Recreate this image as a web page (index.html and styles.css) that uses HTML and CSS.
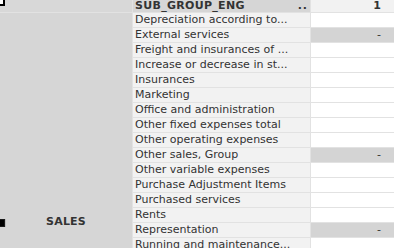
FILE: index.html
```html
<!DOCTYPE html>
<html>
<head>
<meta charset="utf-8">
<link rel="stylesheet" href="styles.css">
</head>
<body>
<div class="pivot">
  <div class="dim-head"><span class="toggle-top"></span></div>
  <div class="head"><span class="head-label">SUB_GROUP_ENG</span><span class="dots">..</span></div>
  <div class="val-head">1</div>
  <div class="dim-cell">
    <span class="toggle"></span>
    <span class="dim-label">SALES</span>
  </div>

  <div class="cell">Depreciation according to...</div><div class="val"></div>
  <div class="cell">External services</div><div class="val shade">-</div>
  <div class="cell">Freight and insurances of ...</div><div class="val"></div>
  <div class="cell">Increase or decrease in st...</div><div class="val"></div>
  <div class="cell">Insurances</div><div class="val"></div>
  <div class="cell">Marketing</div><div class="val"></div>
  <div class="cell">Office and administration</div><div class="val"></div>
  <div class="cell">Other fixed expenses total</div><div class="val"></div>
  <div class="cell">Other operating expenses</div><div class="val"></div>
  <div class="cell">Other sales, Group</div><div class="val shade">-</div>
  <div class="cell">Other variable expenses</div><div class="val"></div>
  <div class="cell">Purchase Adjustment Items</div><div class="val"></div>
  <div class="cell">Purchased services</div><div class="val"></div>
  <div class="cell">Rents</div><div class="val"></div>
  <div class="cell">Representation</div><div class="val shade">-</div>
  <div class="cell">Running and maintenance...</div><div class="val"></div>
</div>
</body>
</html>
```

FILE: styles.css
```css
html, body {
  margin: 0;
  padding: 0;
  width: 394px;
  height: 248px;
  overflow: hidden;
  background: #ffffff;
}

.pivot {
  display: grid;
  grid-template-columns: 132px 177px 83px;
  grid-template-rows: 12px;
  grid-auto-rows: 14px;
  column-gap: 1px;
  row-gap: 1px;
  background: #e2e2e2;
  font-family: "DejaVu Sans", Verdana, sans-serif;
  font-size: 11px;
  color: #333333;
  width: 394px;
}

.dim-head {
  background: #d8d8d8;
  overflow: hidden;
}

.toggle-top {
  display: block;
  width: 3px;
  height: 4px;
  background: #ffffff;
  border-right: 2px solid #000000;
  border-bottom: 2px solid #000000;
}

.head {
  background: #d6d6d6;
  display: flex;
  align-items: center;
  justify-content: space-between;
  padding: 0 2px 0 2px;
  font-weight: bold;
  line-height: 12px;
  letter-spacing: 0.3px;
}

.head-label {
  margin-top: -1px;
}

.dots {
  letter-spacing: 1px;
  margin-right: 0;
}

.val-head {
  background: #f2f2f2;
  font-weight: bold;
  text-align: right;
  padding-right: 13px;
  line-height: 12px;
}

.dim-cell {
  grid-column: 1;
  grid-row: 2 / span 16;
  background: #d6d6d6;
  display: grid;
  grid-template-columns: 6px 1fr 6px;
  align-content: start;
  padding-top: 202px;
}

.toggle {
  grid-column: 1;
  display: block;
  width: 4px;
  height: 6px;
  margin-top: 4px;
  background: #000000;
  border: 1px solid #1a1a1a;
  border-left: 0;
  box-shadow: 1px 0 0 #bcbcbc;
}

.dim-label {
  grid-column: 2;
  text-align: center;
  font-weight: bold;
  line-height: 14px;
  letter-spacing: 0.2px;
}

.cell {
  grid-column: 2;
  background: #f2f2f2;
  padding-left: 2px;
  line-height: 14px;
  white-space: nowrap;
  overflow: hidden;
}

.val {
  grid-column: 3;
  background: #ffffff;
  text-align: right;
  padding-right: 13px;
  line-height: 14px;
}

.val.shade {
  background: #d4d4d4;
}
```
